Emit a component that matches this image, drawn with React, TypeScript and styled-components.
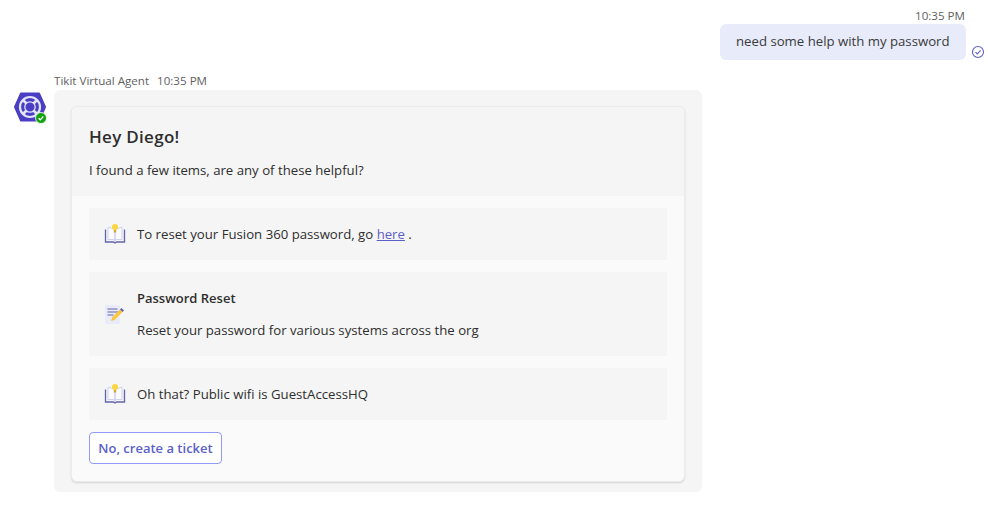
import styled, { createGlobalStyle } from 'styled-components';

const Global = createGlobalStyle`
  html, body {
    margin: 0;
    background: #fff;
    color: #2e2e2e;
    font-family: "Open Sans", "Noto Sans", sans-serif;
    font-size: 13.2px;
  }
`;

const Page = styled.div`
  width: 988px;
  height: 510px;
  overflow: hidden;
  box-sizing: border-box;
  padding: 7px 0 0 14px;
`;

const MineRow = styled.div`
  display: flex;
  flex-direction: column;
  align-items: flex-end;
  padding-right: 22px;
`;

const Time = styled.span`
  font-size: 11.6px;
  line-height: 17px;
  color: #616161;
  margin-right: 1px;
`;

const MineLine = styled.div`
  position: relative;
`;

const MineBubble = styled.div`
  width: 246px;
  height: 36px;
  box-sizing: border-box;
  padding: 0 0 2px 16px;
  border-radius: 6px;
  background: #e8ebfa;
  display: flex;
  align-items: center;
  white-space: nowrap;
  color: #3a3a3a;
`;

const Seen = styled.svg`
  position: absolute;
  left: 251px;
  top: 21px;
  width: 14px;
  height: 14px;
`;

const ThemRow = styled.div`
  display: flex;
  margin-top: 11px;
`;

const AvatarWrap = styled.div`
  position: relative;
  width: 32px;
  height: 32px;
  margin: 20px 8px 0 0;
`;

const Presence = styled.svg`
  position: absolute;
  right: -1px;
  bottom: -1px;
  width: 12px;
  height: 12px;
`;

const Column = styled.div`
  width: 648px;
`;

const Meta = styled.div`
  display: flex;
  gap: 8px;
  height: 18px;
  align-items: center;
  font-size: 11.6px;
  color: #616161;
`;

const Bubble = styled.div`
  margin-top: 1px;
  height: 402px;
  box-sizing: border-box;
  padding: 16px 17px 10px;
  border-radius: 6px;
  background: #f5f5f5;
`;

const Card = styled.div`
  height: 376px;
  box-sizing: border-box;
  border-radius: 6px;
  overflow: hidden;
  background: #fafafa;
  border: 1px solid #ececec;
  box-shadow: 0 1px 2px rgba(0, 0, 0, 0.14);
`;

const Header = styled.div`
  height: 89px;
  box-sizing: border-box;
  padding: 18px 17px 0;
  background: #f5f5f5;
`;

const Title = styled.div`
  font-size: 17px;
  line-height: 24px;
  font-weight: 600;
  letter-spacing: 0.3px;
`;

const Sub = styled.div`
  margin-top: 11px;
  line-height: 20px;
`;

const Body = styled.div`
  padding: 12px 17px 0;
  display: flex;
  flex-direction: column;
  gap: 12px;
`;

const Item = styled.div<{ $h: number }>`
  height: ${(p) => p.$h}px;
  display: flex;
  align-items: center;
  gap: 11px;
  padding-left: 15px;
  background: #f5f5f5;
`;

const ItemTitle = styled.div`
  font-weight: 600;
  font-size: 13px;
  line-height: 20px;
`;

const ItemText = styled.div`
  line-height: 20px;
`;

const ItemStack = styled.div`
  display: flex;
  flex-direction: column;
  gap: 12px;
`;

const Link = styled.a`
  color: #5b5fc7;
  text-decoration: underline;
`;

const Action = styled.button`
  align-self: flex-start;
  width: 133px;
  height: 32px;
  padding: 0;
  border: 1px solid #9299f7;
  border-radius: 4px;
  background: #fff;
  color: #5b5fc7;
  font: 600 13px "Open Sans", "Noto Sans", sans-serif;
`;

const BookIcon = () => (
  <svg width="22" height="22" viewBox="0 0 22 22">
    <path d="M1.500 6.500v12.500h8l1.500 1 1.500-1h8V6.500" fill="#f3f3fa" stroke="#6264a7" strokeWidth="1.300" />
    <path d="M4 4.500v12h5.500l1.500 1V7.500C9.500 6 7 4.500 4 4.500zM18 4.500v12h-5.500l-1.500 1V7.500c1.500-1.500 4-3 7-3z" fill="#fbfbfe" stroke="#c5c7e6" strokeWidth="0.800" />
    <circle cx="11" cy="4" r="3" fill="#fcd53f" />
    <rect x="9.800" y="7" width="2.400" height="2.500" fill="#c9a93a" />
  </svg>
);

const NoteIcon = () => (
  <svg width="22" height="22" viewBox="0 0 22 22">
    <rect x="1" y="2" width="15" height="19" rx="1.500" fill="#e8ebfa" />
    <path d="M3.500 6h10M3.500 9h11M3.500 12h6" stroke="#6264a7" strokeWidth="1.200" />
    <path d="M7 18l1-3.500 8-8 2.500 2.500-8 8z" fill="#fcc63f" />
    <path d="M16 6.500l1.500-1.500 2.500 2.500-1.500 1.500z" fill="#6264a7" />
  </svg>
);

export default function App() {
  return (
    <Page>
      <Global />
      <MineRow>
        <Time>10:35 PM</Time>
        <MineLine>
          <MineBubble>need some help with my password</MineBubble>
          <Seen viewBox="0 0 14 14">
            <circle cx="7" cy="7" r="5.500" fill="none" stroke="#5b5fc7" strokeWidth="1.100" />
            <path d="M4.500 7.200l1.800 1.800 3.300-3.600" fill="none" stroke="#5b5fc7" strokeWidth="1.100" />
          </Seen>
        </MineLine>
      </MineRow>
      <ThemRow>
        <AvatarWrap>
          <svg width="32" height="32" viewBox="0 0 32 32">
            <path d="M7 2.500h18L31 16l-6 13.500H7L1 16z" fill="#4a3fc4" stroke="#4a3fc4" strokeWidth="2" strokeLinejoin="round" />
            <circle cx="16" cy="16" r="10" fill="none" stroke="#e4e4f6" strokeWidth="2.200" />
            <circle cx="16" cy="16" r="5.200" fill="#4a3fc4" stroke="#e4e4f6" strokeWidth="1.300" />
            <path d="M9 9l3.500 3.500M23 9l-3.500 3.500M9 23l3.500-3.500M23 23l-3.500-3.500" stroke="#e4e4f6" strokeWidth="2.600" />
          </svg>
          <Presence viewBox="0 0 12 12">
            <circle cx="6" cy="6" r="5.500" fill="#13a10e" stroke="#fff" strokeWidth="0.800" />
            <path d="M3.600 6.200l1.700 1.600 3-3.300" fill="none" stroke="#fff" strokeWidth="1.200" />
          </Presence>
        </AvatarWrap>
        <Column>
          <Meta>
            <span>Tikit Virtual Agent</span>
            <span>10:35 PM</span>
          </Meta>
          <Bubble>
            <Card>
              <Header>
                <Title>Hey Diego!</Title>
                <Sub>I found a few items, are any of these helpful?</Sub>
              </Header>
              <Body>
                <Item $h={52}>
                  <BookIcon />
                  <ItemText>
                    To reset your Fusion 360 password, go <Link href="#">here</Link> .
                  </ItemText>
                </Item>
                <Item $h={84}>
                  <NoteIcon />
                  <ItemStack>
                    <ItemTitle>Password Reset</ItemTitle>
                    <ItemText>Reset your password for various systems across the org</ItemText>
                  </ItemStack>
                </Item>
                <Item $h={52}>
                  <BookIcon />
                  <ItemText>Oh that? Public wifi is GuestAccessHQ</ItemText>
                </Item>
                <Action>No, create a ticket</Action>
              </Body>
            </Card>
          </Bubble>
        </Column>
      </ThemRow>
    </Page>
  );
}
